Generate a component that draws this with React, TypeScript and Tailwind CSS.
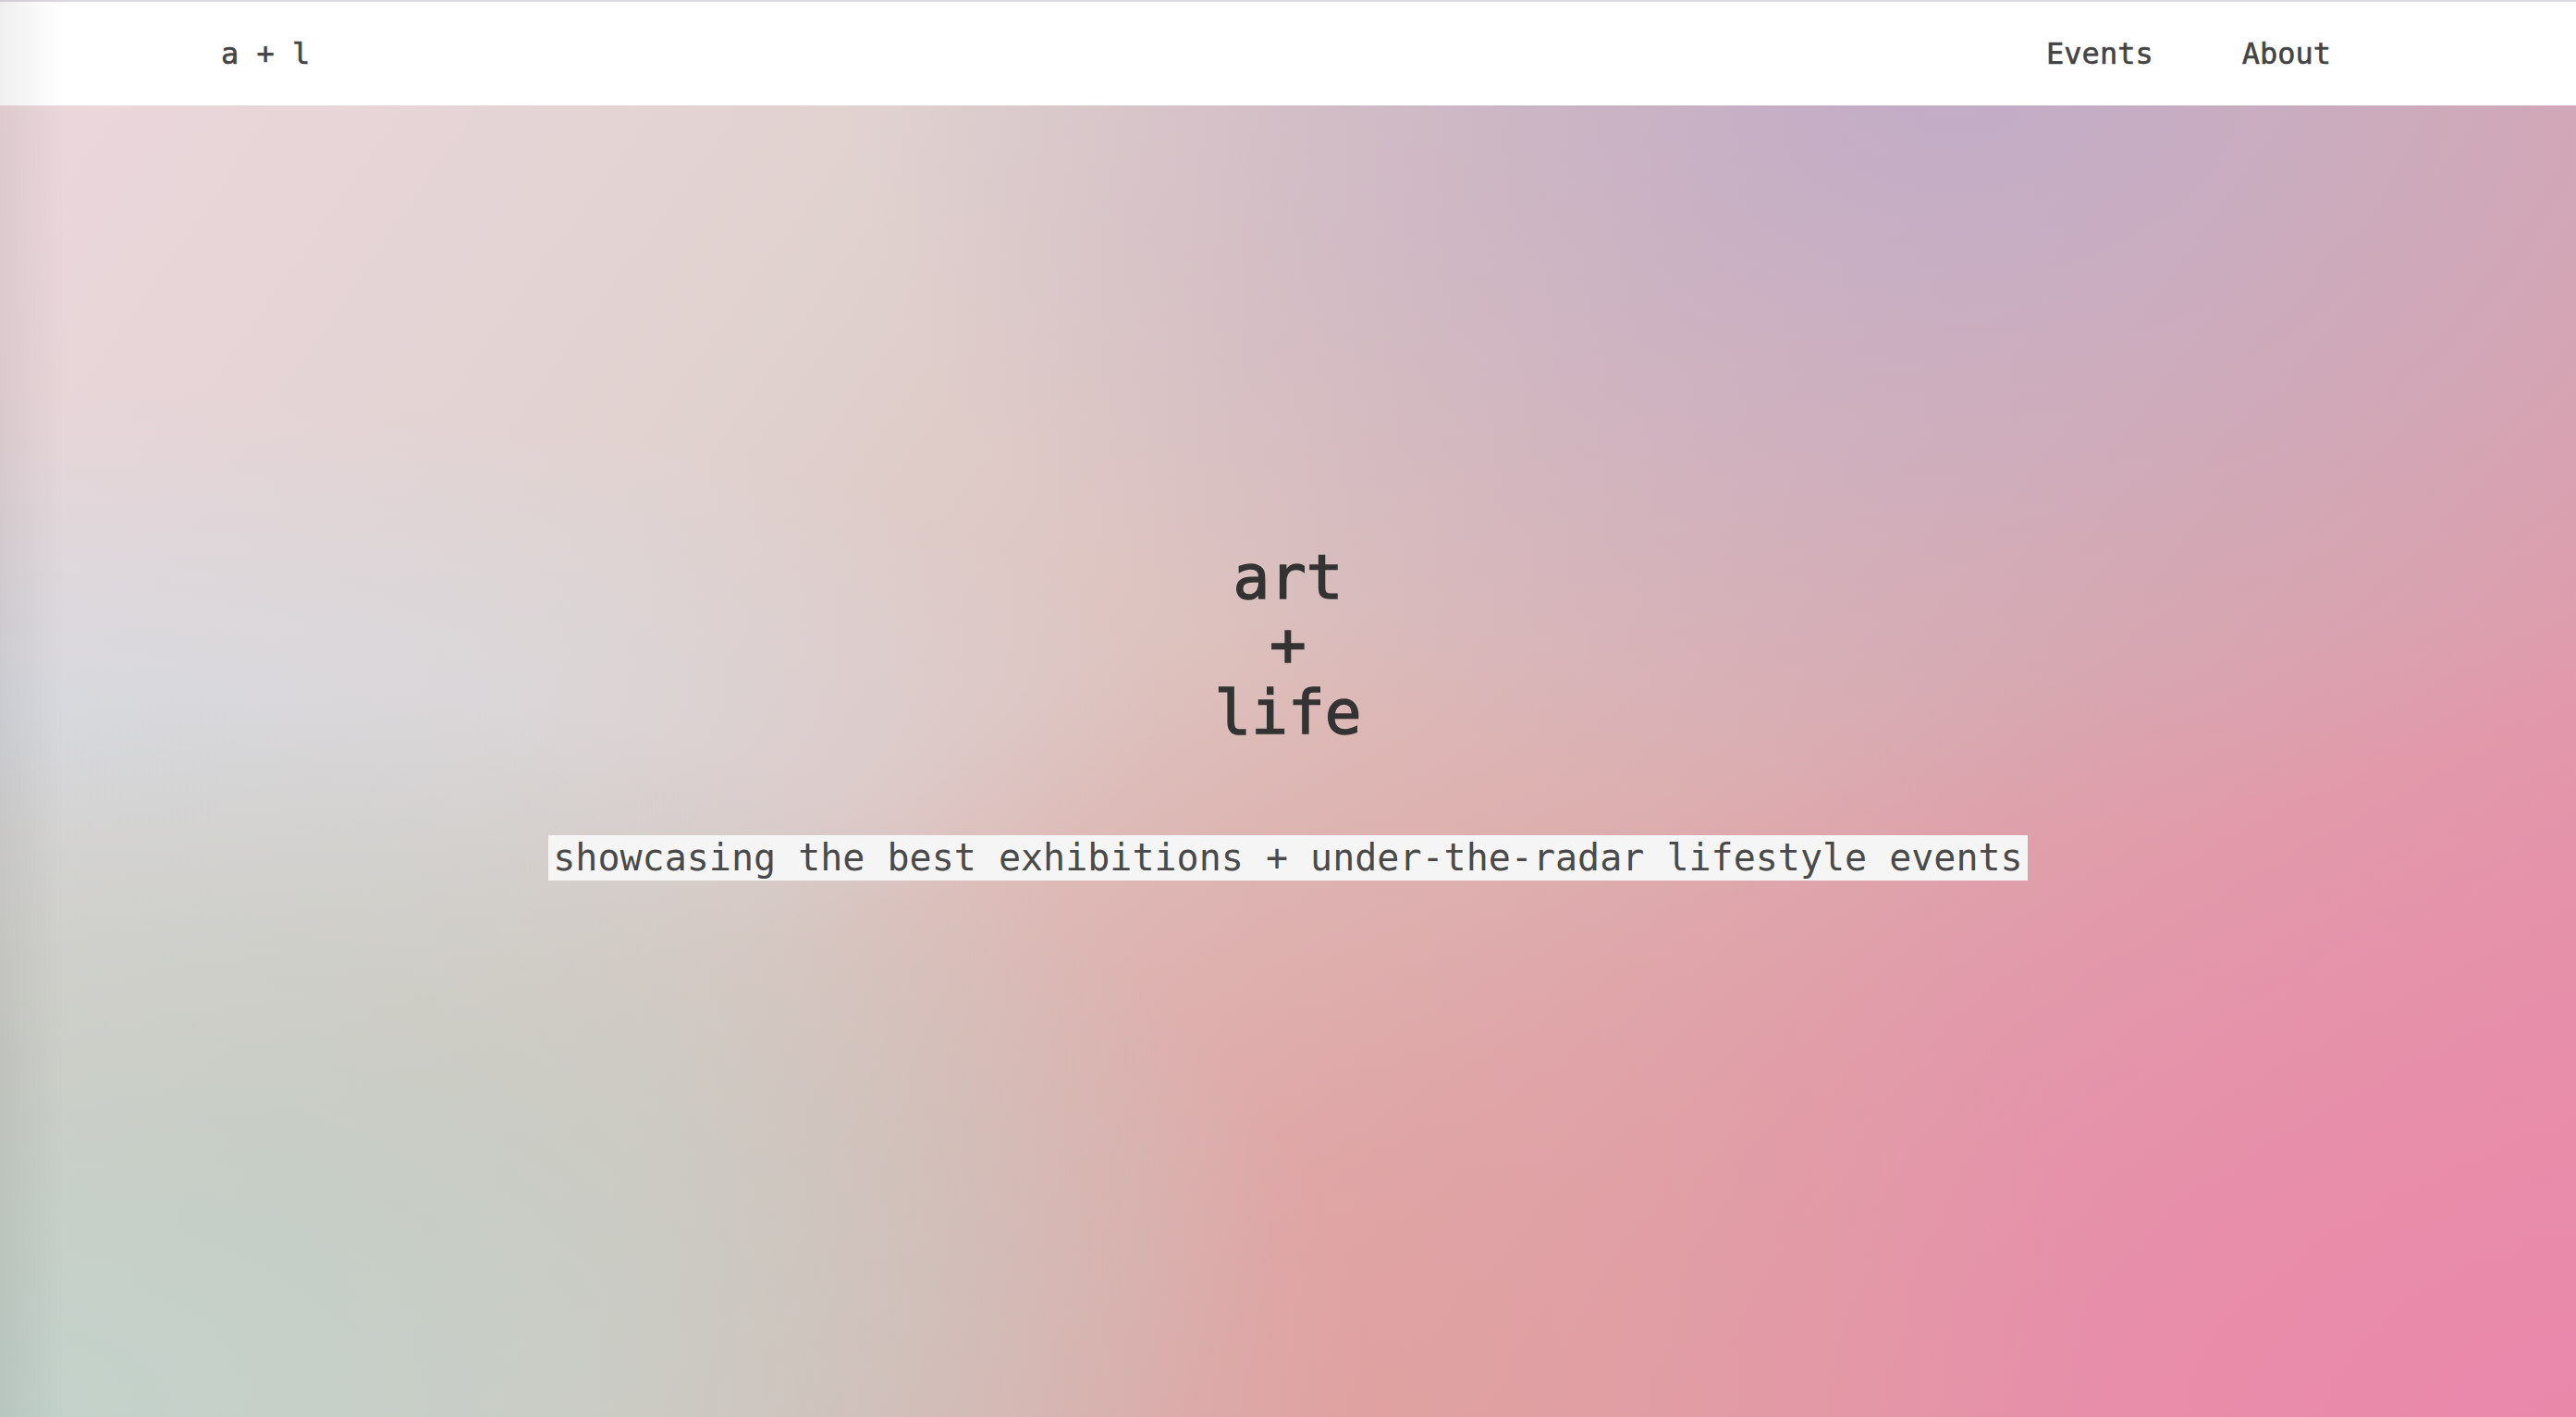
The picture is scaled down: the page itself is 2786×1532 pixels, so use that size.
import React from "react";

const mono = "font-['DejaVu_Sans_Mono','Liberation_Mono',monospace]";

function Nav() {
  return (
    <div className="absolute top-0 inset-x-0 h-[114px] bg-white border-t-2 border-[#dcd9e0] flex items-center justify-between pl-[239px] pr-[265px]">
      <div className={`${mono} text-[32px] text-[#444444] [-webkit-text-stroke:0.6px_#444444]`}>a + l</div>
      <div className={`${mono} flex gap-[96px] text-[32px] text-[#444444] [-webkit-text-stroke:0.6px_#444444]`}>
        <a className="cursor-pointer">Events</a>
        <a className="cursor-pointer">About</a>
      </div>
    </div>
  );
}

export default function App() {
  return (
    <div
      className="relative w-full h-screen overflow-hidden bg-[image:radial-gradient(ellipse_at_76%_6%,rgba(192,172,200,0.95)_0%,rgba(192,172,200,0)_40%),radial-gradient(ellipse_at_0%_100%,rgba(194,210,202,1)_0%,rgba(194,210,202,0)_38%),radial-gradient(ellipse_at_12%_85%,rgba(200,196,186,0.8)_0%,rgba(200,196,186,0)_30%),radial-gradient(ellipse_at_0%_50%,rgba(214,218,224,0.9)_0%,rgba(214,218,224,0)_32%),radial-gradient(ellipse_at_52%_100%,rgba(224,160,158,0.9)_0%,rgba(224,160,158,0)_40%),radial-gradient(ellipse_at_100%_100%,rgba(234,136,170,1)_0%,rgba(234,136,170,0)_40%),linear-gradient(125deg,#ecd7dd_0%,#e0d2cf_28%,#dcc0bc_48%,#dca6aa_72%,#e68ea9_100%)]"
    >
      <div className="h-full pt-[8px] flex flex-col items-center justify-center">
        <h1
          className={`${mono} text-center text-[66px] leading-[73px] text-[#333333] [-webkit-text-stroke:1.5px_#333333]`}
        >
          art
          <br />+
          <br />
          life
        </h1>
        <p
          className={`${mono} mt-[96px] bg-[#f5f5f5] px-[5px] text-[40px] leading-[49px] text-[#4a4a4a] whitespace-nowrap`}
        >
          showcasing the best exhibitions + under-the-radar lifestyle events
        </p>
      </div>
      <Nav />
      <div className="absolute inset-y-0 left-0 w-[70px] bg-linear-to-r from-black/[0.06] to-transparent pointer-events-none" />
    </div>
  );
}
